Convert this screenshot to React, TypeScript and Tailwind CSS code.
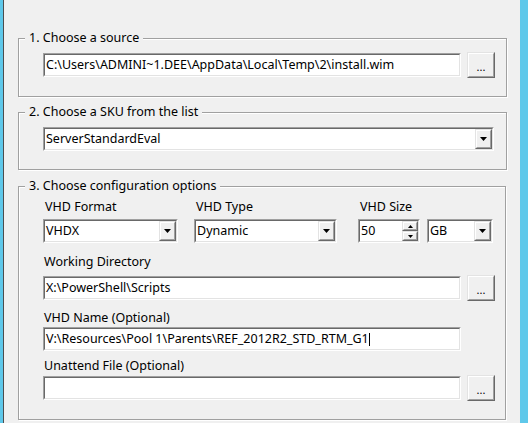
import React from "react";

// classic win32 3d edges
const sunkenOuter = "border border-t-[#a0a0a0] border-l-[#a0a0a0] border-b-white border-r-white";
const sunkenInner = "border border-t-[#696969] border-l-[#696969] border-b-[#e3e3e3] border-r-[#e3e3e3] bg-white";
const raisedOuter = "border border-t-[#e3e3e3] border-l-[#e3e3e3] border-b-[#696969] border-r-[#696969]";
const raisedInner = "border border-t-white border-l-white border-b-[#a0a0a0] border-r-[#a0a0a0] bg-[#f0f0f0]";

const Arrow = ({ down = true, w = 7, h = 4 }: { down?: boolean; w?: number; h?: number }) =>
(
    <svg width={w} height={h} viewBox={`0 0 ${w} ${h}`}>
        {down
            ? <polygon points={`0,0 ${w},0 ${w / 2},${h}`} fill="#000" />
            : <polygon points={`0,${h} ${w},${h} ${w / 2},0`} fill="#000" />}
    </svg>
);

const Raised = ({ className, children }: { className: string; children?: React.ReactNode }) =>
(
    <div className={`${raisedOuter} shrink-0 ${className}`}>
        <div className={`${raisedInner} h-full flex items-center justify-center`}>{children}</div>
    </div>
);

const TextBox = ({ width, value, caret }: { width: string; value?: string; caret?: boolean }) =>
(
    <div className={`${sunkenOuter} ${width} h-[24px] shrink-0`}>
        <div className={`${sunkenInner} h-full flex items-center pl-px whitespace-nowrap overflow-hidden`}>
            <span>{value}</span>
            {caret && <span className="inline-block w-px h-[13px] bg-black" />}
        </div>
    </div>
);

const Browse = () =>
(
    <Raised className="w-[28px] h-[26px]">
        <span className="leading-none text-[11px] pt-[3px]">...</span>
    </Raised>
);

const Combo = ({ width, value }: { width: string; value: string }) =>
(
    <div className={`${sunkenOuter} ${width} h-[24px] shrink-0`}>
        <div className={`${sunkenInner} h-full flex`}>
            <div className="flex-1 flex items-center pl-px">{value}</div>
            <Raised className="w-[17px] h-full">
                <Arrow />
            </Raised>
        </div>
    </div>
);

const Spin = () =>
(
    <div className={`${sunkenOuter} w-[62px] h-[24px] shrink-0`}>
        <div className={`${sunkenInner} h-full flex`}>
            <div className="flex-1 flex items-center pl-px">50</div>
            <div className="w-[16px] flex flex-col">
                <Raised className="h-[10px]"><Arrow down={false} w={5} h={3} /></Raised>
                <Raised className="h-[10px]"><Arrow w={5} h={3} /></Raised>
            </div>
        </div>
    </div>
);

const Group = ({ title, className, children }: { title: string; className: string; children: React.ReactNode }) =>
(
    <fieldset className={`min-w-0 border border-[#a0a0a0] shadow-[inset_1px_1px_0_#ffffff,1px_1px_0_#ffffff] ${className}`}>
        <legend className="ml-[6px] px-[4px] leading-[16px] bg-[#f0f0f0]">{title}</legend>
        <div className="pl-[24px]">{children}</div>
    </fieldset>
);

export default function App()
{
    return (
        <div className="w-[528px] h-[423px] bg-[#f0f0f0] flex overflow-hidden font-['Noto_Sans',sans-serif] text-[12.5px] leading-[16px] text-black">
            <div className="w-[3px] shrink-0 bg-[#5fc8ea]" />
            <div className="w-px shrink-0 bg-[#4d4d4d]" />
            <div className="flex-1 min-w-0 pt-[30px] pl-[14px] pr-[13px] flex flex-col">
                <Group title="1. Choose a source" className="pt-[6px] pb-[18px]">
                    <div className="flex items-center gap-[6px]">
                        <TextBox width="w-[418px]" value="C:\Users\ADMINI~1.DEE\AppData\Local\Temp\2\install.wim" />
                        <Browse />
                    </div>
                </Group>

                <Group title="2. Choose a SKU from the list" className="mt-[7px] pt-[7px] pb-[18px]">
                    <Combo width="w-[451px]" value="ServerStandardEval" />
                </Group>

                <Group title="3. Choose configuration options" className="mt-[8px] pt-[5px] pb-[18px] mr-px">
                    <div className="flex">
                        <div className="flex flex-col gap-[4px]">
                            <div className="pl-[2px]">VHD Format</div>
                            <Combo width="w-[135px]" value="VHDX" />
                        </div>
                        <div className="ml-[16px] flex flex-col gap-[4px]">
                            <div className="pl-[2px]">VHD Type</div>
                            <Combo width="w-[143px]" value="Dynamic" />
                        </div>
                        <div className="ml-[21px] flex flex-col gap-[4px]">
                            <div className="pl-[2px]">VHD Size</div>
                            <div className="flex gap-[7px]">
                                <Spin />
                                <Combo width="w-[66px]" value="GB" />
                            </div>
                        </div>
                    </div>

                    <div className="mt-[11px] pl-px">Working Directory</div>
                    <div className="mt-[5px] flex items-center gap-[6px]">
                        <TextBox width="w-[418px]" value="X:\PowerShell\Scripts" />
                        <Browse />
                    </div>

                    <div className="mt-[9px] pl-px">VHD Name (Optional)</div>
                    <div className="mt-px">
                        <TextBox width="w-[418px]" value="V:\Resources\Pool 1\Parents\REF_2012R2_STD_RTM_G1" caret />
                    </div>

                    <div className="mt-[7px] pl-px">Unattend File (Optional)</div>
                    <div className="mt-px flex items-center gap-[6px]">
                        <TextBox width="w-[418px]" />
                        <Browse />
                    </div>
                </Group>
            </div>
            <div className="w-[8px] shrink-0 bg-[#5fc8ea]" />
        </div>
    );
}
